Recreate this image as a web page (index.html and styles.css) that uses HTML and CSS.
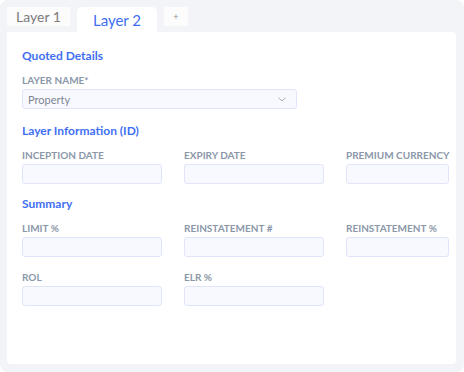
FILE: index.html
```html
<!DOCTYPE html>
<html>
<head>
<meta charset="utf-8">
<link rel="stylesheet" href="styles.css">
</head>
<body>
<div class="frame">
  <div class="tabs">
    <div class="tab">Layer 1</div>
    <div class="tab active">Layer 2</div>
    <div class="tab add">+</div>
  </div>
  <div class="panel">
    <div class="section-title">Quoted Details</div>
    <div class="field wide">
      <div class="label">Layer Name*</div>
      <div class="input select">
        <span class="value">Property</span>
        <svg class="chev" width="8" height="5" viewBox="0 0 8 5"><path d="M0.5 0.8 L4 4 L7.5 0.8" fill="none" stroke="#a3abb8" stroke-width="1"/></svg>
      </div>
    </div>
    <div class="section-title">Layer Information (ID)</div>
    <div class="grid">
      <div class="field"><div class="label">Inception Date</div><div class="input"></div></div>
      <div class="field"><div class="label">Expiry Date</div><div class="input"></div></div>
      <div class="field"><div class="label">Premium Currency</div><div class="input"></div></div>
    </div>
    <div class="section-title">Summary</div>
    <div class="grid">
      <div class="field"><div class="label">Limit %</div><div class="input"></div></div>
      <div class="field"><div class="label">Reinstatement #</div><div class="input"></div></div>
      <div class="field"><div class="label">Reinstatement %</div><div class="input"></div></div>
      <div class="field"><div class="label">ROL</div><div class="input"></div></div>
      <div class="field"><div class="label">ELR %</div><div class="input"></div></div>
    </div>
  </div>
</div>
</body>
</html>
```
FILE: styles.css
```css
* { box-sizing: border-box; }
html, body { margin: 0; padding: 0; background: #ffffff; }
body { font-family: "Lato", "Noto Sans", sans-serif; }
.frame {
  width: 464px;
  height: 372px;
  background: #f3f4f8;
  border-radius: 8px;
  padding: 7px 8px 8px 7px;
  display: flex;
  flex-direction: column;
}
.tabs {
  display: flex;
  align-items: flex-start;
  gap: 7px;
  height: 25px;
}
.tab {
  height: 19px;
  width: 63px;
  background: #fcfcfd;
  color: #7b7b7b;
  font-size: 14px;
  line-height: 19px;
  text-align: center;
}
.tab.active {
  width: 80px;
  height: 25px;
  line-height: 27px;
  background: #ffffff;
  color: #3f6ff2;
  border-radius: 5px 5px 0 0;
  font-size: 15px;
}
.tab.add {
  width: 24px;
  font-size: 10px;
  color: #999;
  line-height: 18px;
}
.panel {
  flex: 1;
  background: #ffffff;
  border-radius: 0 4px 4px 4px;
  padding: 16px 7px 0 15px;
}
.section-title {
  font-size: 12px;
  font-weight: 700;
  color: #3f6ff2;
  line-height: 16px;
}
.label {
  font-size: 10px;
  font-weight: 700;
  color: #8b97a9;
  text-transform: uppercase;
  letter-spacing: 0;
  line-height: 12px;
  margin-bottom: 3px;
  white-space: nowrap;
}
.field { margin-top: 10px; }
.field.wide { width: 275px; margin-bottom: 14px; }
.input {
  height: 20px;
  background: #f8f9ff;
  border: 1px solid #e0e5fa;
  border-radius: 3px;
}
.select {
  display: flex;
  align-items: center;
  justify-content: space-between;
  padding: 0 10px 0 5px;
}
.value {
  font-size: 11px;
  color: #7d8591;
}
.grid {
  display: grid;
  grid-template-columns: 140px 140px 103px;
  column-gap: 22px;
  row-gap: 4px;
  margin-bottom: 12px;
}
```
